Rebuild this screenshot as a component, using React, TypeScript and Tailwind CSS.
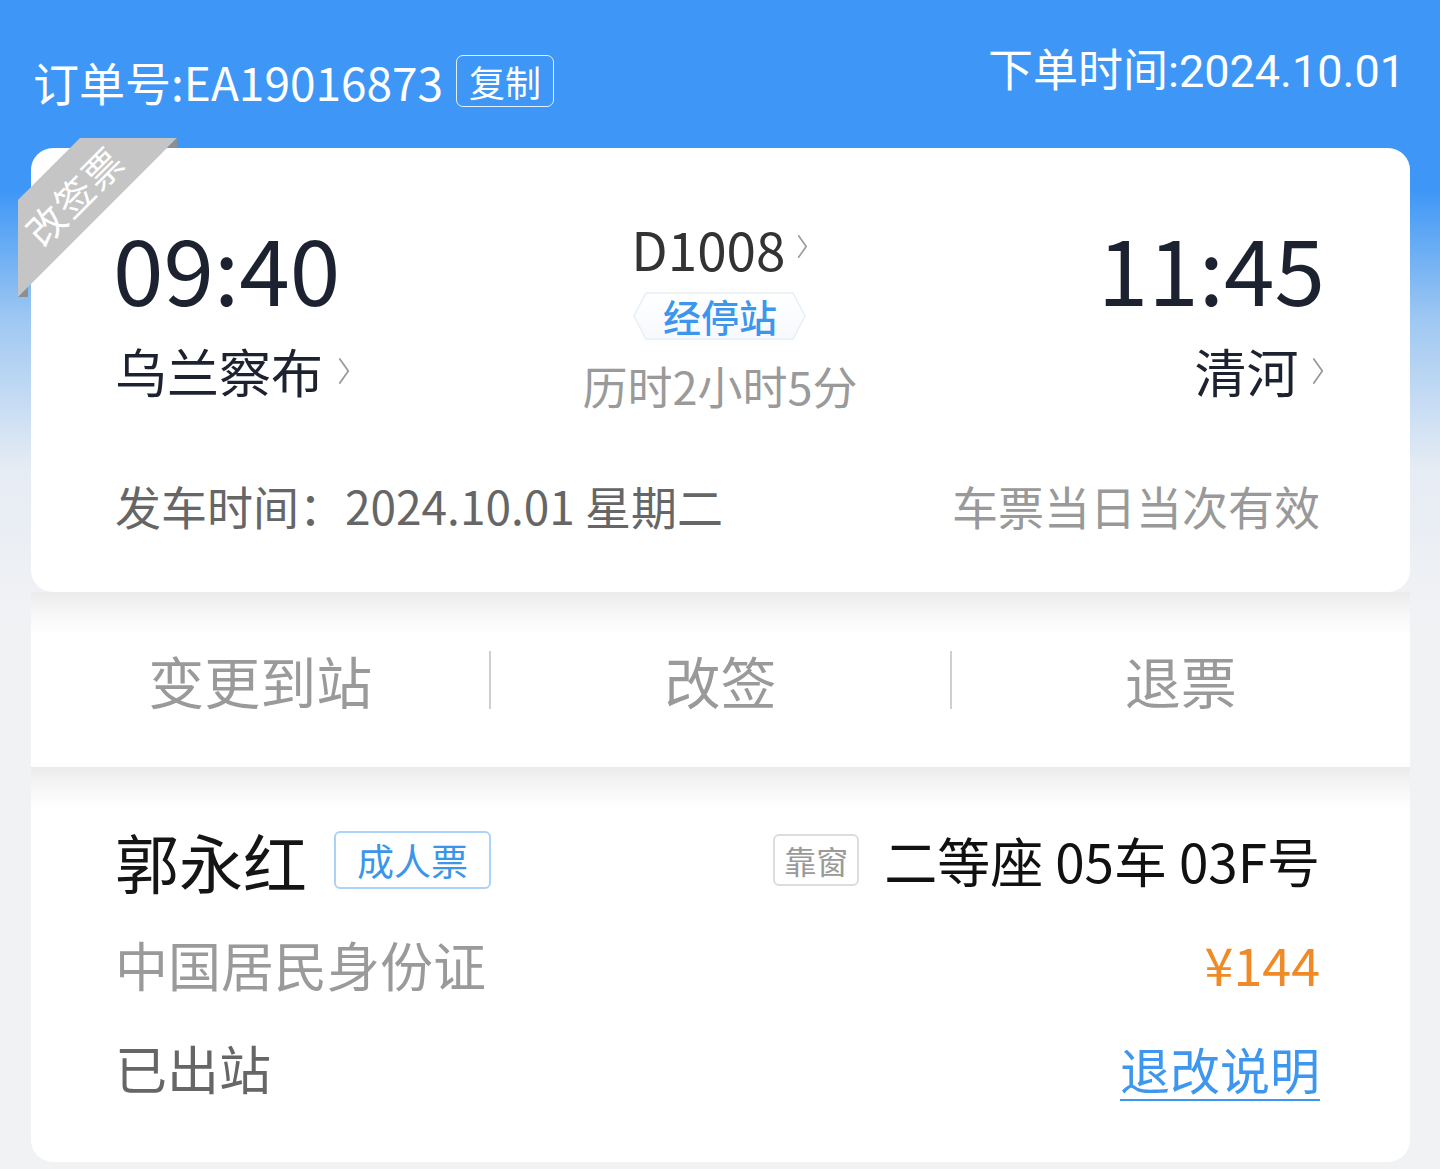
import React from "react";

const Chevron = ({ h = 28, className = "" }: { h?: number; className?: string }) => (
  <svg width={h * 0.45} height={h} viewBox="0 0 12 28" className={className} fill="none">
    <polyline points="1.5,2 10,14 1.5,26" stroke="#9a9a9a" strokeWidth="1.8" strokeLinecap="round" strokeLinejoin="round" />
  </svg>
);

export default function App() {
  return (
    <div className="w-[1440px] min-h-[1169px] bg-[linear-gradient(180deg,#3e97f6_0px,#3e97f6_190px,#9fc8f2_320px,#e6ecf4_470px,#f1f2f4_620px,#f1f2f4_100%)] font-['Noto_Sans_CJK_SC','Noto_Sans',sans-serif] overflow-hidden">
      {/* header */}
      <div className="flex justify-between h-[148px] pl-[33px] pr-[35px]">
        <div className="flex items-center h-[52px] mt-[55px]">
          <span className="text-[46px] leading-[46px] text-white">订单号:EA19016873</span>
          <span className="ml-[13px] h-[52px] px-[12px] flex items-center border-[1.5px] border-white/85 rounded-[7px] text-[36px] leading-none text-white">复制</span>
        </div>
        <div className="mt-[49px] h-[46px] text-[45px] leading-[46px] text-white font-['Roboto','Noto_Sans_CJK_SC',sans-serif]">
          下单时间:2024.10.01
        </div>
      </div>

      {/* card */}
      <div className="mx-[31px] w-[1379px]">
        {/* section 1 */}
        <div className="relative h-[444px] bg-white rounded-[22px] pt-[73px] pl-[84px] pr-[85px]">
          {/* ribbon */}
          <svg className="absolute left-[-13px] top-[-10px]" width="160" height="160" viewBox="0 0 160 160">
            <polygon points="62,0 159,0 0,159 0,62" fill="#c5c5c5" />
            <polygon points="159,0 159,10 149,10" fill="#8e8e8e" />
            <polygon points="0,159 10,159 10,149" fill="#8e8e8e" />
          </svg>
          <div className="absolute left-[43px] top-[47px] -translate-x-1/2 -translate-y-1/2 -rotate-45 text-[38px] leading-none tracking-[2px] text-white whitespace-nowrap">
            改签票
          </div>

          <div className="grid grid-cols-[1fr_auto_1fr]">
            <div className="flex flex-col items-start">
              <div className="text-[91px] leading-[91px] text-[#1d2230] -ml-[2px]">09:40</div>
              <div className="mt-[33px] h-[52px] flex items-center">
                <span className="text-[52px] leading-[52px] text-[#1d2230]">乌兰察布</span>
                <Chevron h={28} className="ml-[15px]" />
              </div>
            </div>
            <div className="flex flex-col items-center">
              <div className="h-[54px] flex items-center">
                <span className="text-[53px] leading-[54px] text-[#333333]">D1008</span>
                <Chevron h={25} className="ml-[12px] -mt-[4px]" />
              </div>
              <div className="relative mt-[17px] w-[173px] h-[48px] flex items-center justify-center">
                <svg className="absolute inset-0" width="173" height="48" viewBox="0 0 173 48">
                  <defs>
                    <linearGradient id="hx" x1="0" y1="0" x2="0" y2="1">
                      <stop offset="0" stopColor="#ffffff" />
                      <stop offset="1" stopColor="#f6f9fd" />
                    </linearGradient>
                  </defs>
                  <polygon points="13,1 160,1 172,24 160,47 13,47 1,24" fill="url(#hx)" stroke="#e8eef5" strokeWidth="1.5" />
                </svg>
                <span className="relative text-[38px] leading-none font-medium text-[#3d96ee]">经停站</span>
              </div>
              <div className="mt-[24px] text-[45px] leading-[44px] text-[#9a9a9a]">历时2小时5分</div>
            </div>
            <div className="flex flex-col items-end">
              <div className="text-[91px] leading-[91px] text-[#1d2230]">11:45</div>
              <div className="mt-[33px] h-[52px] flex items-center">
                <span className="text-[52px] leading-[52px] text-[#1d2230]">清河</span>
                <Chevron h={28} className="ml-[14px]" />
              </div>
            </div>
          </div>

          <div className="mt-[74px] flex justify-between pr-[5px] text-[46px] leading-[46px]">
            <span className="text-[#666666]">发车时间：2024.10.01 星期二</span>
            <span className="text-[#999999]">车票当日当次有效</span>
          </div>
        </div>

        {/* actions */}
        <div className="h-[175px] flex items-center bg-[linear-gradient(180deg,#ebebec_0px,#f7f7f8_22px,#ffffff_42px)]">
          <div className="flex-1 flex justify-center text-[56px] leading-none text-[#9a9a9a]">变更到站</div>
          <div className="w-[2px] h-[58px] bg-[#cfcfcf] shrink-0" />
          <div className="flex-1 flex justify-center text-[56px] leading-none text-[#9a9a9a]">改签</div>
          <div className="w-[2px] h-[58px] bg-[#cfcfcf] shrink-0" />
          <div className="flex-1 flex justify-center text-[56px] leading-none text-[#9a9a9a]">退票</div>
        </div>

        {/* passenger */}
        <div className="h-[395px] rounded-b-[22px] bg-[linear-gradient(180deg,#ebebec_0px,#f7f7f8_22px,#ffffff_42px)] pt-[41px] pl-[84px] pr-[90px]">
          <div className="h-[104px] flex items-center justify-between">
            <div className="flex items-center">
              <span className="text-[64px] leading-none text-[#151515]">郭永红</span>
              <span className="ml-[27px] w-[157px] h-[58px] flex items-center justify-center border-2 border-[#a9d3f7] rounded-[6px] text-[37px] leading-none text-[#3b95ea]">成人票</span>
            </div>
            <div className="flex items-center">
              <span className="w-[86px] h-[52px] flex items-center justify-center border-2 border-[#dddddd] rounded-[6px] text-[32px] leading-none text-[#9a9a9a]">靠窗</span>
              <span className="ml-[25px] text-[53px] leading-none text-[#111111]">二等座 05车 03F号</span>
            </div>
          </div>
          <div className="h-[104px] flex items-center justify-between">
            <span className="text-[53px] leading-none text-[#9a9a9a]">中国居民身份证</span>
            <span className="text-[52px] leading-none text-[#f08a26]">¥144</span>
          </div>
          <div className="h-[104px] flex items-center justify-between">
            <span className="text-[52px] leading-none text-[#666666]">已出站</span>
            <span className="text-[50px] leading-none text-[#3d97ee] underline decoration-2 underline-offset-[9px]">退改说明</span>
          </div>
        </div>
      </div>
    </div>
  );
}
